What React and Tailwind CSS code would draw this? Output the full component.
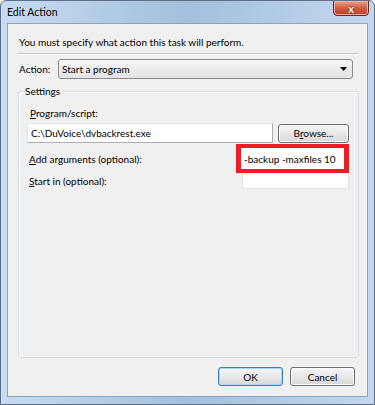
import React from "react";

const font = { fontFamily: 'Lato, "Segoe UI", "Noto Sans", sans-serif' };

function Btn({ children, primary, className = "" }) {
  return (
    <button
      className={`h-[19px] rounded-[3px] border text-[10px] leading-none text-black bg-gradient-to-b from-[#f6f6f6] via-[#e8e8e8] to-[#d8d8d8] ${
        primary ? "border-[#3c7fb1] shadow-[inset_0_0_0_1px_#a6d8f5]" : "border-[#707070] shadow-[inset_0_0_0_1px_#fbfbfb]"
      } ${className}`}
    >
      {children}
    </button>
  );
}

export default function App() {
  return (
    <div
      className="w-[375px] h-[405px] flex flex-col rounded-t-[6px] border border-[#5d6f86] bg-gradient-to-r from-[#c7dcf1] via-[#a3bfdd] to-[#c3d8ee] overflow-hidden"
      style={font}
    >
      {/* title bar */}
      <div className="h-[22px] flex items-start shrink-0">
        <div className="pl-[6px] pt-[4px] text-[10.5px] leading-[15px] text-black">Edit Action</div>
        <div className="ml-auto mr-[5px] w-[36px] h-[16px] -mt-px rounded-b-[4px] border border-[#6b2a1f] bg-gradient-to-b from-[#e8a494] via-[#cf5c44] to-[#c0392a] flex items-center justify-center shadow-[inset_0_0_0_1px_#eeb3a6]">
          <span className="text-white font-bold text-[11px] leading-none [text-shadow:0_0_2px_#3a120c]">x</span>
        </div>
      </div>

      {/* client area */}
      <div className="flex-1 mx-[6px] mb-[7px] border border-[#8da2bb] bg-[#f0f0f0] flex flex-col text-[10px] leading-[14px] text-black whitespace-nowrap">
        <div className="pl-[11px] pt-[11px] h-[25px]">You must specify what action this task will perform.</div>
        <div className="mt-[4px] mx-[9px] h-[2px] border-t border-[#c8c8c8] border-b border-b-white" />

        {/* action row */}
        <div className="mt-[4px] flex items-center">
          <div className="pl-[11px] w-[50px]">
            Act<span className="underline">i</span>on:
          </div>
          <div className="w-[295px] h-[20px] rounded-[3px] border border-[#8b8b8b] bg-gradient-to-b from-[#f5f5f5] to-[#e3e3e3] flex items-center px-[3px]">
            <span>Start a program</span>
            <svg width="7" height="4" viewBox="0 0 7 4" className="ml-auto mr-[2px]">
              <path d="M0 0h7L3.5 4z" fill="#000" />
            </svg>
          </div>
        </div>

        {/* settings group */}
        <div className="relative mt-[12px] ml-[10px] w-[341px] h-[267px] rounded-[3px] border border-[#d5dfe5] shadow-[inset_1px_1px_0_#fff] flex flex-col px-[8px]">
          <span className="absolute -top-[8px] left-[4px] px-[2px] bg-[#f0f0f0]">Settings</span>
          <div className="mt-[14px] pl-[3px]">
            <span className="underline">P</span>rogram/script:
          </div>
          <div className="mt-[3px] flex items-center">
            <div className="w-[246px] h-[20px] border border-[#abadb3] border-t-[#e3e9ef] border-l-[#e2e3ea] bg-white flex items-center px-[3px]">
              C:\DuVoice\dvbackrest.exe
            </div>
            <Btn className="ml-[5px] w-[71px]">
              B<span className="underline">r</span>owse...
            </Btn>
          </div>
          <div className="flex items-center h-[29px] mt-[1px]">
            <div className="pl-[2px]">
              <span className="underline">A</span>dd arguments (optional):
            </div>
            <div className="ml-auto mr-[1px] w-[113px] h-[29px] border-[#ee1c25] border-x-[5px] border-y-[4px] bg-white flex items-center pl-[3px]">
              -backup -maxfiles 10
            </div>
          </div>
          <div className="flex items-center h-[16px]">
            <div className="pl-[2px]">
              <span className="underline">S</span>tart in (optional):
            </div>
            <div className="ml-auto mr-[1px] w-[107px] h-[16px] border border-t-0 border-[#dfe3e8] bg-white" />
          </div>
        </div>

        {/* buttons */}
        <div className="mt-[9px] flex justify-end pr-[12px] gap-[7px]">
          <Btn primary className="w-[65px]">OK</Btn>
          <Btn className="w-[65px]">Cancel</Btn>
        </div>
      </div>
    </div>
  );
}
